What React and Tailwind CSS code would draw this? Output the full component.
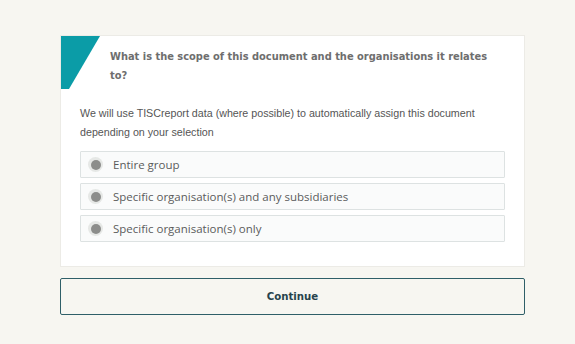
const options = ['Entire group', 'Specific organisation(s) and any subsidiaries', 'Specific organisation(s) only'];

export default function App() {
    return (
        <div className="w-[575px] h-[344px] bg-[#f7f6f1] pt-[35px] pl-[60px] pr-[50px]">
            <div className="relative bg-white border border-[#ecebe6] pb-6">
                <svg className="absolute left-0 top-0" width="40" height="53" viewBox="0 0 40 53">
                    <polygon points="0,0 39,0 8,53 0,53" fill="#0b9ca7" />
                </svg>
                <div className="pl-[49px] pt-[11px] w-[440px] font-['DejaVu_Sans',sans-serif] font-bold text-[9.9px] leading-[19px] text-[#6e6e6e]">
                    What is the scope of this document and the organisations it relates to?
                </div>
                <div className="px-[19px] pt-[19px]">
                    <p className="font-['Liberation_Sans',sans-serif] text-[10.7px] leading-[19px] text-[#555]">
                        We will use TISCreport data (where possible) to automatically assign this document depending on your selection
                    </p>
                    <div className="mt-[9px] flex flex-col gap-[5px]">
                        {options.map(o => (
                            <label key={o} className="flex items-center h-[27px] border border-[#dde2e2] bg-[#fafbfb] rounded-[1px] pl-[7px]">
                                <span className="w-[15px] h-[15px] rounded-full bg-[#e6e8e6] flex items-center justify-center">
                                    <span className="w-[10px] h-[10px] rounded-full bg-[#8c8d8b]" />
                                </span>
                                <span className="ml-[10px] font-['Open_Sans',sans-serif] text-[11.5px] text-[#5b5b5b]">{o}</span>
                            </label>
                        ))}
                    </div>
                </div>
            </div>
            <button className="mt-[11px] w-full h-[37px] border border-[#2f5f68] rounded-[2px] font-['DejaVu_Sans',sans-serif] font-bold text-[10.2px] text-[#27434c]">
                Continue
            </button>
        </div>
    );
}
